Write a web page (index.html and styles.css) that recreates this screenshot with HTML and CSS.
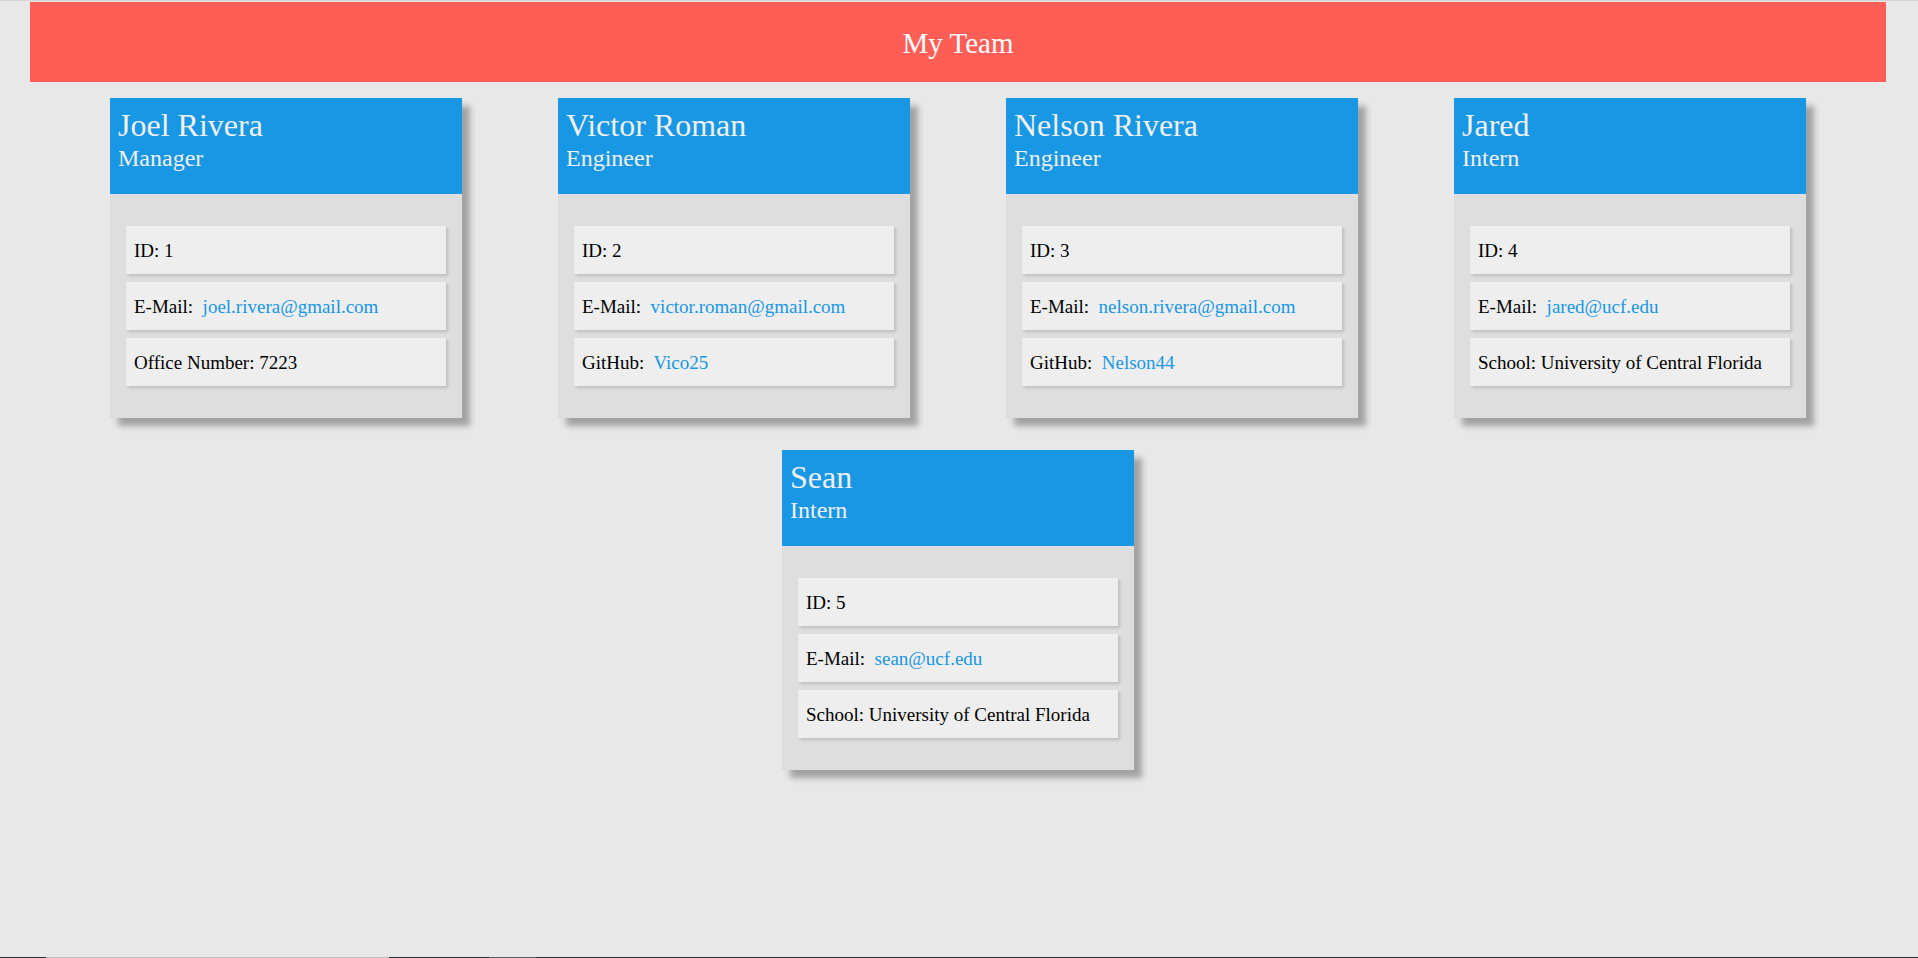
FILE: index.html
```html
<!DOCTYPE html>
<html lang="en">
<head>
<meta charset="UTF-8">
<title>My Team</title>
<link rel="stylesheet" href="styles.css">
</head>
<body>
<header class="banner">My Team</header>
<main class="team">
  <article class="card">
    <div class="card-head">
      <h2 class="name">Joel Rivera</h2>
      <h3 class="role">Manager</h3>
    </div>
    <ul class="details">
      <li class="item">ID: 1</li>
      <li class="item">E-Mail:&nbsp; <a class="link" href="#">joel.rivera@gmail.com</a></li>
      <li class="item">Office Number: 7223</li>
    </ul>
  </article>
  <article class="card">
    <div class="card-head">
      <h2 class="name">Victor Roman</h2>
      <h3 class="role">Engineer</h3>
    </div>
    <ul class="details">
      <li class="item">ID: 2</li>
      <li class="item">E-Mail:&nbsp; <a class="link" href="#">victor.roman@gmail.com</a></li>
      <li class="item">GitHub:&nbsp; <a class="link" href="#">Vico25</a></li>
    </ul>
  </article>
  <article class="card">
    <div class="card-head">
      <h2 class="name">Nelson Rivera</h2>
      <h3 class="role">Engineer</h3>
    </div>
    <ul class="details">
      <li class="item">ID: 3</li>
      <li class="item">E-Mail:&nbsp; <a class="link" href="#">nelson.rivera@gmail.com</a></li>
      <li class="item">GitHub:&nbsp; <a class="link" href="#">Nelson44</a></li>
    </ul>
  </article>
  <article class="card">
    <div class="card-head">
      <h2 class="name">Jared</h2>
      <h3 class="role">Intern</h3>
    </div>
    <ul class="details">
      <li class="item">ID: 4</li>
      <li class="item">E-Mail:&nbsp; <a class="link" href="#">jared@ucf.edu</a></li>
      <li class="item">School: University of Central Florida</li>
    </ul>
  </article>
  <article class="card">
    <div class="card-head">
      <h2 class="name">Sean</h2>
      <h3 class="role">Intern</h3>
    </div>
    <ul class="details">
      <li class="item">ID: 5</li>
      <li class="item">E-Mail:&nbsp; <a class="link" href="#">sean@ucf.edu</a></li>
      <li class="item">School: University of Central Florida</li>
    </ul>
  </article>
</main>
<div class="edge"></div>
</body>
</html>
```
FILE: styles.css
```css
* { box-sizing: border-box; }

html, body {
  margin: 0;
  padding: 0;
}

body {
  background: #e8e8e8;
  border-top: 1px solid #d3d3d3;
  font-family: "Liberation Serif", "Times New Roman", serif;
  color: #000;
  min-height: 958px;
}

.banner {
  margin: 1px 32px 0 30px;
  height: 80px;
  background: #ff5e57;
  color: #ffffff;
  font-size: 29px;
  display: flex;
  align-items: center;
  justify-content: center;
  padding-top: 2px;
}

.team {
  width: 1856px;
  margin-left: 30px;
  padding-top: 16px;
  display: flex;
  flex-wrap: wrap;
  justify-content: center;
  column-gap: 96px;
  row-gap: 32px;
}

.card {
  width: 352px;
  background: #dedede;
  box-shadow: 8px 8px 6px rgba(0, 0, 0, 0.3);
}

.card-head {
  background: #1797e4;
  color: #f0f0f0;
  padding: 8px 8px 21px 8px;
  height: 96px;
}

.name {
  margin: 0;
  font-size: 32px;
  font-weight: normal;
  line-height: 38px;
}

.role {
  margin: 0;
  font-size: 24px;
  font-weight: normal;
  line-height: 29px;
}

.details {
  list-style: none;
  margin: 0;
  padding: 32px 16px;
  display: flex;
  flex-direction: column;
  gap: 8px;
}

.item {
  background: #eeeeee;
  font-size: 19px;
  line-height: 20px;
  padding: 15px 8px 13px 8px;
  height: 48px;
  box-shadow: 2px 2px 3px rgba(0, 0, 0, 0.15);
}

.link {
  color: #1797e4;
  text-decoration: none;
}

.edge {
  position: fixed;
  left: 0;
  right: 0;
  bottom: 0;
  height: 1px;
  background: linear-gradient(to right,
    #263238 0, #263238 46px,
    #c0c0c0 46px, #c0c0c0 389px,
    #263238 389px, #263238 489px,
    #5a6266 489px, #5a6266 536px,
    #263238 536px, #263238 100%);
}
```
